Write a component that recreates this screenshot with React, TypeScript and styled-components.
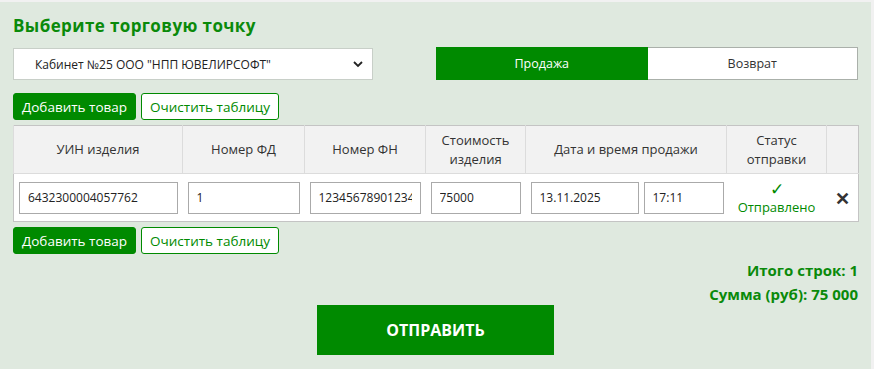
import React from "react";
import styled, { createGlobalStyle } from "styled-components";

const GREEN = "#008a00";

const GlobalStyle = createGlobalStyle`
  html, body {
    margin: 0;
    padding: 0;
    background: #f1f1f1;
    font-family: "Open Sans", "Noto Sans", sans-serif;
  }
`;

const Panel = styled.div`
  box-sizing: border-box;
  width: 871px;
  height: 367px;
  margin-top: 2px;
  padding: 14px 13px 0 13px;
  background: #dfe9df;
`;

const Title = styled.h2`
  margin: 0 0 11px 0;
  font-size: 17px;
  font-weight: 700;
  letter-spacing: 0.4px;
  line-height: 20px;
  color: #0a8a0a;
`;

const TopRow = styled.div`
  display: flex;
  justify-content: space-between;
  align-items: flex-start;
`;

const SelectBox = styled.div`
  position: relative;
  box-sizing: border-box;
  width: 360px;
  height: 32px;
  margin-top: 1px;
  background: #fff;
  border: 1px solid #c8cfc8;
  display: flex;
  align-items: center;
  padding-left: 21px;
  font-size: 12px;
  color: #222;
`;

const Chevron = styled.svg`
  position: absolute;
  right: 9px;
  top: 11px;
`;

const Toggle = styled.div`
  display: flex;
  width: 422px;
  height: 33px;
  box-sizing: border-box;
`;

const ToggleBtn = styled.div<{ $active?: boolean }>`
  flex: 1;
  display: flex;
  align-items: center;
  justify-content: center;
  font-size: 12.5px;
  box-sizing: border-box;
  background: ${(p) => (p.$active ? GREEN : "#fff")};
  color: ${(p) => (p.$active ? "#fff" : "#333")};
  border: 1px solid ${(p) => (p.$active ? GREEN : "#aab0aa")};
  border-left: ${(p) => (p.$active ? `1px solid ${GREEN}` : "none")};
`;

const ButtonRow = styled.div<{ $top: number }>`
  display: flex;
  gap: 5px;
  margin-top: ${(p) => p.$top}px;
`;

const ActionButton = styled.button<{ $primary?: boolean }>`
  box-sizing: border-box;
  height: 27px;
  padding: 0 8px;
  border-radius: 3px;
  font-family: inherit;
  font-size: 13.5px;
  font-weight: 500;
  cursor: pointer;
  background: ${(p) => (p.$primary ? GREEN : "#fff")};
  color: ${(p) => (p.$primary ? "#fff" : GREEN)};
  border: 1px solid ${GREEN};
`;

const Table = styled.table`
  width: 845px;
  margin-top: 5px;
  border-collapse: collapse;
  table-layout: fixed;
  border: 1px solid #c4c4c4;
`;

const Th = styled.th`
  height: 47px;
  padding: 0;
  background: #f2f2f2;
  border-left: 1px solid #dcdcdc;
  font-weight: 400;
  font-size: 13px;
  line-height: 19px;
  color: #333;
  text-align: center;
`;

const Td = styled.td`
  height: 47px;
  padding: 0 5px;
  background: #fff;
  border-top: 1px solid #dcdcdc;
  text-align: center;
`;

const DateCell = styled.div`
  display: flex;
  gap: 5px;
`;

const Input = styled.input<{ $w: number }>`
  box-sizing: border-box;
  width: ${(p) => p.$w}px;
  height: 32px;
  padding: 0 8px;
  border: 1px solid #aaa;
  font-family: inherit;
  font-size: 12px;
  color: #222;
  background: #fff;
`;

const Status = styled.div`
  display: flex;
  flex-direction: column;
  align-items: center;
  color: ${GREEN};
  font-size: 13px;
  line-height: 18px;
`;

const Check = styled.span`
  font-size: 17px;
  line-height: 18px;
`;

const Remove = styled.span`
  font-size: 18px;
  font-weight: 700;
  color: #333;
`;

const Totals = styled.div`
  margin-top: 4px;
  text-align: right;
  font-size: 15px;
  font-weight: 700;
  line-height: 24px;
  color: #0a8a0a;
`;

const SubmitRow = styled.div`
  display: flex;
  justify-content: flex-start;
  padding-left: 304px;
  margin-top: -1px;
`;

const SubmitButton = styled.button`
  width: 237px;
  height: 50px;
  border: none;
  background: ${GREEN};
  color: #fff;
  font-family: inherit;
  font-size: 16px;
  font-weight: 700;
  cursor: pointer;
`;

const widths = [169, 122, 121, 100, 201, 100, 32];

const App: React.FC = () => {
  return (
    <>
      <GlobalStyle />
      <Panel>
        <Title>Выберите торговую точку</Title>
        <TopRow>
          <SelectBox>
            Кабинет №25 ООО "НПП ЮВЕЛИРСОФТ"
            <Chevron width="10" height="8" viewBox="0 0 10 8">
              <path d="M1 2l4 4 4-4" fill="none" stroke="#222" strokeWidth="1.8" />
            </Chevron>
          </SelectBox>
          <Toggle>
            <ToggleBtn $active>Продажа</ToggleBtn>
            <ToggleBtn>Возврат</ToggleBtn>
          </Toggle>
        </TopRow>
        <ButtonRow $top={13}>
          <ActionButton $primary>Добавить товар</ActionButton>
          <ActionButton>Очистить таблицу</ActionButton>
        </ButtonRow>
        <Table>
          <colgroup>
            {widths.map((w, i) => (
              <col key={i} style={{ width: w }} />
            ))}
          </colgroup>
          <thead>
            <tr>
              <Th>УИН изделия</Th>
              <Th>Номер ФД</Th>
              <Th>Номер ФН</Th>
              <Th>
                Стоимость
                <br />
                изделия
              </Th>
              <Th>Дата и время продажи</Th>
              <Th>
                Статус
                <br />
                отправки
              </Th>
              <Th />
            </tr>
          </thead>
          <tbody>
            <tr>
              <Td>
                <Input $w={159} defaultValue="6432300004057762" />
              </Td>
              <Td>
                <Input $w={112} defaultValue="1" />
              </Td>
              <Td>
                <Input $w={111} defaultValue="1234567890123456" />
              </Td>
              <Td>
                <Input $w={90} defaultValue="75000" />
              </Td>
              <Td>
                <DateCell>
                  <Input $w={108} defaultValue="13.11.2025" />
                  <Input $w={80} defaultValue="17:11" />
                </DateCell>
              </Td>
              <Td>
                <Status>
                  <Check>✓</Check>
                  <span>Отправлено</span>
                </Status>
              </Td>
              <Td>
                <Remove>✕</Remove>
              </Td>
            </tr>
          </tbody>
        </Table>
        <ButtonRow $top={5}>
          <ActionButton $primary>Добавить товар</ActionButton>
          <ActionButton>Очистить таблицу</ActionButton>
        </ButtonRow>
        <Totals>
          Итого строк: 1
          <br />
          Сумма (руб): 75 000
        </Totals>
        <SubmitRow>
          <SubmitButton>ОТПРАВИТЬ</SubmitButton>
        </SubmitRow>
      </Panel>
    </>
  );
};

export default App;
